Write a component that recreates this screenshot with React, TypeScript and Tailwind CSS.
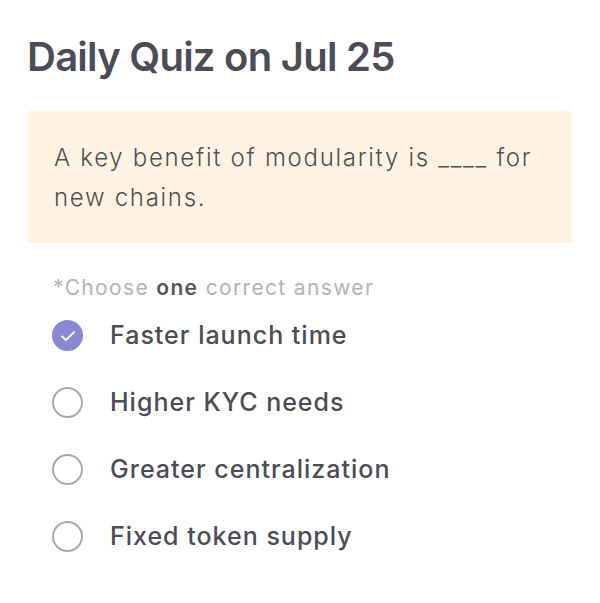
import React from "react";

const options = [
  { label: "Faster launch time", checked: true },
  { label: "Higher KYC needs", checked: false },
  { label: "Greater centralization", checked: false },
  { label: "Fixed token supply", checked: false },
];

export default function App() {
  return (
    <div
      className="w-[600px] h-[603px] bg-white"
      style={{ fontFamily: "Inter, 'Noto Sans', sans-serif" }}
    >
      <div className="pt-[35px] px-[27px]">
        <h1 className="text-[40px] leading-[44px] font-semibold text-[#4b4c55] tracking-[-0.75px]">
          Daily Quiz on Jul 25
        </h1>
        <div className="mt-[32px] bg-[#fef3e2] rounded-[3px] px-[27px] pt-[27px] pb-[25px]">
          <p className="text-[24px] leading-[40px] font-light text-[#4f4f55] tracking-[1.7px]">
            A key benefit of modularity is ____ for new chains.
          </p>
        </div>
        <p className="mt-[32px] pl-[26px] text-[21px] leading-[26px] text-[#b3b3b6] tracking-[1.35px]">
          *Choose <span className="font-semibold text-[#55565d]">one</span> correct answer
        </p>
        <div className="mt-[1px] flex flex-col">
          {options.map((o) => (
            <div key={o.label} className="flex items-center h-[67px] pl-[25px]">
              {o.checked ? (
                <div className="w-[31px] h-[31px] rounded-full bg-[#8a88d1] flex items-center justify-center">
                  <svg width="16" height="16" viewBox="0 0 16 16" fill="none">
                    <path d="M2 8.4 L6 12 L14 4.2" stroke="white" strokeWidth="1.8" strokeLinecap="round" strokeLinejoin="round" />
                  </svg>
                </div>
              ) : (
                <div className="w-[31px] h-[31px] rounded-full border-[2px] border-[#ababae]" />
              )}
              <span className="ml-[27px] text-[25px] font-medium text-[#4b4c55] tracking-[1px]">{o.label}</span>
            </div>
          ))}
        </div>
      </div>
    </div>
  );
}
